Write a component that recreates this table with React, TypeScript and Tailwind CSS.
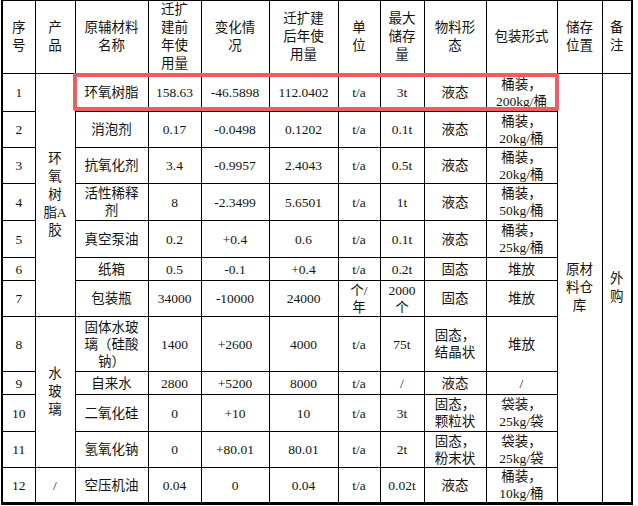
import React from "react";

const C = "border border-black text-center align-middle p-0 leading-[17px]";
const H = "border border-black text-center align-middle p-0 leading-[18px]";

type Row = {
  h: string;
  n: string;
  name: React.ReactNode;
  before: string;
  change: string;
  after: string;
  unit: React.ReactNode;
  max: React.ReactNode;
  state: React.ReactNode;
  pack: React.ReactNode;
};

const rows: Row[] = [
  { h: "h-[38px]", n: "1", name: "环氧树脂", before: "158.63", change: "-46.5898", after: "112.0402", unit: "t/a", max: "3t", state: "液态", pack: <>桶装，<br />200kg/桶</> },
  { h: "h-[36px]", n: "2", name: "消泡剂", before: "0.17", change: "-0.0498", after: "0.1202", unit: "t/a", max: "0.1t", state: "液态", pack: <>桶装，<br />20kg/桶</> },
  { h: "h-[36px]", n: "3", name: "抗氧化剂", before: "3.4", change: "-0.9957", after: "2.4043", unit: "t/a", max: "0.5t", state: "液态", pack: <>桶装，<br />20kg/桶</> },
  { h: "h-[37px]", n: "4", name: <>活性稀释<br />剂</>, before: "8", change: "-2.3499", after: "5.6501", unit: "t/a", max: "1t", state: "液态", pack: <>桶装，<br />50kg/桶</> },
  { h: "h-[37px]", n: "5", name: "真空泵油", before: "0.2", change: "+0.4", after: "0.6", unit: "t/a", max: "0.1t", state: "液态", pack: <>桶装，<br />25kg/桶</> },
  { h: "h-[23px]", n: "6", name: "纸箱", before: "0.5", change: "-0.1", after: "+0.4", unit: "t/a", max: "0.2t", state: "固态", pack: "堆放" },
  { h: "h-[36px]", n: "7", name: "包装瓶", before: "34000", change: "-10000", after: "24000", unit: <>个/<br />年</>, max: <>2000<br />个</>, state: "固态", pack: "堆放" },
  { h: "h-[55px]", n: "8", name: <>固体水玻<br />璃（硅酸<br />钠）</>, before: "1400", change: "+2600", after: "4000", unit: "t/a", max: "75t", state: <>固态，<br />结晶状</>, pack: "堆放" },
  { h: "h-[23px]", n: "9", name: "自来水", before: "2800", change: "+5200", after: "8000", unit: "t/a", max: "/", state: "液态", pack: "/" },
  { h: "h-[37px]", n: "10", name: "二氧化硅", before: "0", change: "+10", after: "10", unit: "t/a", max: "3t", state: <>固态，<br />颗粒状</>, pack: <>袋装，<br />25kg/袋</> },
  { h: "h-[36px]", n: "11", name: "氢氧化钠", before: "0", change: "+80.01", after: "80.01", unit: "t/a", max: "2t", state: <>固态，<br />粉末状</>, pack: <>袋装，<br />25kg/袋</> },
  { h: "h-[36px]", n: "12", name: "空压机油", before: "0.04", change: "0", after: "0.04", unit: "t/a", max: "0.02t", state: "液态", pack: <>桶装，<br />10kg/桶</> },
];

export default function App() {
  return (
    <div
      className="relative w-[638px] h-[506px] bg-white text-[#141414] text-[13.5px]"
      style={{ fontFamily: '"Liberation Serif", "Noto Sans CJK SC", serif' }}
    >
      <div className="pl-[1px]">
        <table className="table-fixed border-collapse w-[630px] border-t border-l-2 border-r-2 border-b-[3px] border-black">
          <colgroup>
            <col className="w-[33px]" />
            <col className="w-[40px]" />
            <col className="w-[73px]" />
            <col className="w-[53px]" />
            <col className="w-[68px]" />
            <col className="w-[69px]" />
            <col className="w-[42px]" />
            <col className="w-[44px]" />
            <col className="w-[62px]" />
            <col className="w-[71px]" />
            <col className="w-[45px]" />
            <col className="w-[30px]" />
          </colgroup>
          <tbody>
            <tr className="h-[73px]">
              <td className={H}>序<br />号</td>
              <td className={H}>产<br />品</td>
              <td className={H}>原辅材料<br />名称</td>
              <td className={H}>迁扩<br />建前<br />年使<br />用量</td>
              <td className={H}>变化情<br />况</td>
              <td className={H}>迁扩建<br />后年使<br />用量</td>
              <td className={H}>单<br />位</td>
              <td className={H}>最大<br />储存<br />量</td>
              <td className={H}>物料形<br />态</td>
              <td className={H}>包装形式</td>
              <td className={H}>储存<br />位置</td>
              <td className={H}>备<br />注</td>
            </tr>
            {rows.map((r, i) => (
              <tr key={r.n} className={r.h}>
                <td className={C}>{r.n}</td>
                {i === 0 && (
                  <td className={H} rowSpan={7}>环<br />氧<br />树<br />脂A<br />胶</td>
                )}
                {i === 7 && (
                  <td className={H} rowSpan={4}>水<br />玻<br />璃</td>
                )}
                {i === 11 && <td className={C}>/</td>}
                <td className={C}>{r.name}</td>
                <td className={C}>{r.before}</td>
                <td className={C}>{r.change}</td>
                <td className={C}>{r.after}</td>
                <td className={C}>{r.unit}</td>
                <td className={C}>{r.max}</td>
                <td className={C}>{r.state}</td>
                <td className={C}>{r.pack}</td>
                {i === 0 && (
                  <>
                    <td className={H} rowSpan={12}>原材<br />料仓<br />库</td>
                    <td className={H} rowSpan={12}>外<br />购</td>
                  </>
                )}
              </tr>
            ))}
          </tbody>
        </table>
      </div>
      <div className="absolute left-[73px] top-[73px] w-[486px] h-[38px] border-4 border-[#f25c5c] rounded-[2px] pointer-events-none" />
    </div>
  );
}
